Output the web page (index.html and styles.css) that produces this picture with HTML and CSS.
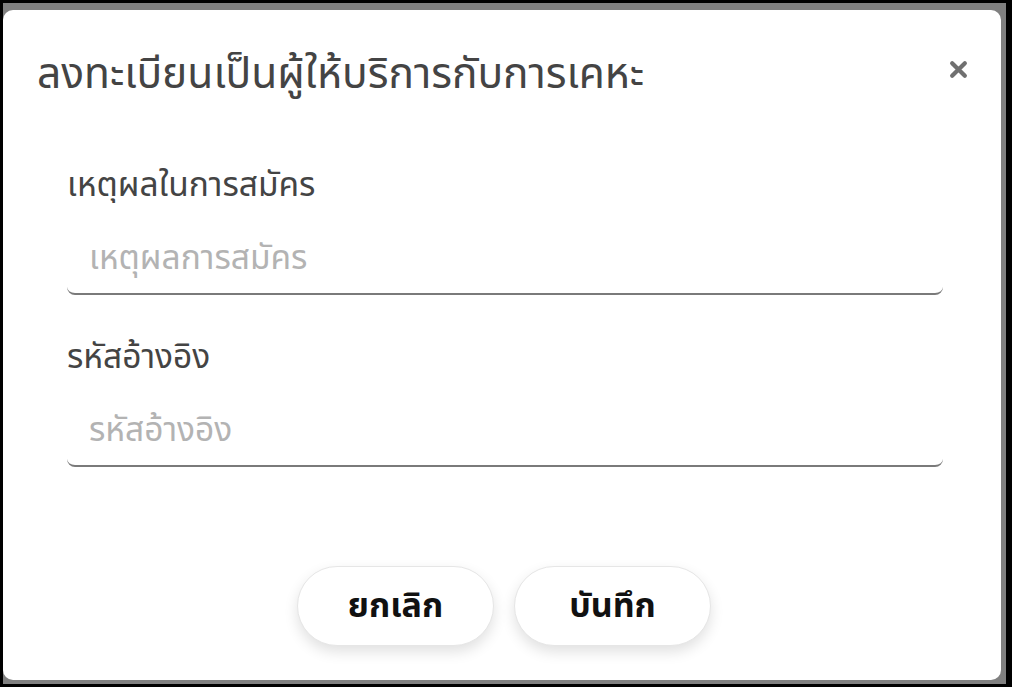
FILE: index.html
```html
<!DOCTYPE html>
<html lang="th">
<head>
<meta charset="utf-8">
<link rel="stylesheet" href="styles.css">
</head>
<body>
<div class="frame">
  <div class="backdrop">
    <div class="modal">
      <div class="modal-header">
        <h1 class="title">ลงทะเบียนเป็นผู้ให้บริการกับการเคหะ</h1>
        <button class="close" aria-label="close">
          <svg width="18" height="18" viewBox="0 0 18 18"><path d="M3 3 L15 15 M15 3 L3 15" stroke="#707070" stroke-width="4" stroke-linecap="round"/></svg>
        </button>
      </div>
      <div class="modal-body">
        <div class="field">
          <label class="label">เหตุผลในการสมัคร</label>
          <input class="input" placeholder="เหตุผลการสมัคร">
        </div>
        <div class="field">
          <label class="label">รหัสอ้างอิง</label>
          <input class="input" placeholder="รหัสอ้างอิง">
        </div>
      </div>
      <div class="modal-footer">
        <button class="btn">ยกเลิก</button>
        <button class="btn">บันทึก</button>
      </div>
    </div>
  </div>
</div>
</body>
</html>
```
FILE: styles.css
```css
* { box-sizing: border-box; }
html, body { margin: 0; padding: 0; }
body {
  background: #000;
  width: 1012px;
  height: 687px;
  font-family: "Noto Sans", "Noto Sans Thai", sans-serif;
}
.frame {
  padding: 3px 6px 3px 3px;
  height: 687px;
}
.backdrop {
  background: #808080;
  height: 100%;
  padding: 7px 5px 4px 0;
}
.modal {
  background: #fff;
  border-radius: 10px;
  height: 100%;
  display: flex;
  flex-direction: column;
}
.modal-header {
  display: flex;
  align-items: flex-start;
  justify-content: space-between;
  padding: 37px 33px 0 34px;
}
.title {
  margin: 0;
  font-size: 42.5px;
  line-height: 50px;
  font-weight: 400;
  color: #444;
}
.close {
  background: none;
  border: 0;
  padding: 0;
  margin-top: 13px;
  width: 19px;
  height: 19px;
}
.close svg { width: 19px; height: 19px; display: block; }
.modal-body {
  padding: 66px 58px 0 64px;
  display: flex;
  flex-direction: column;
  gap: 40px;
}
.field {
  display: flex;
  flex-direction: column;
}
.label {
  font-size: 33.5px;
  line-height: 40px;
  color: #444;
}
.input {
  border: 0;
  border-bottom: 2px solid #7a7a7a;
  border-radius: 0 0 8px 8px;
  font: inherit;
  font-size: 33.5px;
  line-height: 40px;
  height: 92px;
  padding: 33px 22px 17px;
  color: #333;
  outline: none;
}
.input::placeholder { color: #b3b3b3; }
.modal-footer {
  margin-top: auto;
  padding: 0 0 34px 4px;
  display: flex;
  justify-content: center;
  gap: 20px;
}
.btn {
  width: 197px;
  height: 80px;
  border-radius: 40px;
  border: 1px solid #e6e6e6;
  background: #fff;
  box-shadow: 0 6px 14px rgba(0,0,0,0.12);
  font: inherit;
  font-size: 34px;
  font-weight: 700;
  color: #111;
}
```
